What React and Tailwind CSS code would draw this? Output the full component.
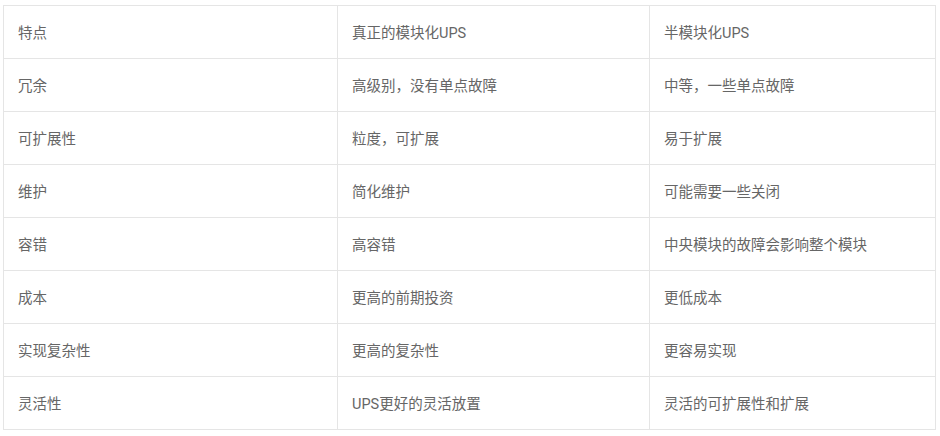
const rows = [
  ["特点", "真正的模块化UPS", "半模块化UPS"],
  ["冗余", "高级别，没有单点故障", "中等，一些单点故障"],
  ["可扩展性", "粒度，可扩展", "易于扩展"],
  ["维护", "简化维护", "可能需要一些关闭"],
  ["容错", "高容错", "中央模块的故障会影响整个模块"],
  ["成本", "更高的前期投资", "更低成本"],
  ["实现复杂性", "更高的复杂性", "更容易实现"],
  ["灵活性", "UPS更好的灵活放置", "灵活的可扩展性和扩展"],
];

export default function App() {
  return (
    <div className="w-[940px] h-[436px] bg-white pt-[5px] pl-[3px]" style={{ fontFamily: 'Roboto, "Noto Sans CJK SC", sans-serif' }}>
      <table className="border-collapse w-[932px] table-fixed text-[14.5px] text-[#666]">
        <colgroup>
          <col className="w-[334px]" />
          <col className="w-[312px]" />
          <col className="w-[286px]" />
        </colgroup>
        <tbody>
          {rows.map((r, i) => (
            <tr key={i} className="h-[53px]">
              {r.map((c, j) => (
                <td key={j} className="border border-[#e5e5e5] px-[14px] pt-[3px] pb-0 align-middle leading-[20px]">
                  {c}
                </td>
              ))}
            </tr>
          ))}
        </tbody>
      </table>
    </div>
  );
}
